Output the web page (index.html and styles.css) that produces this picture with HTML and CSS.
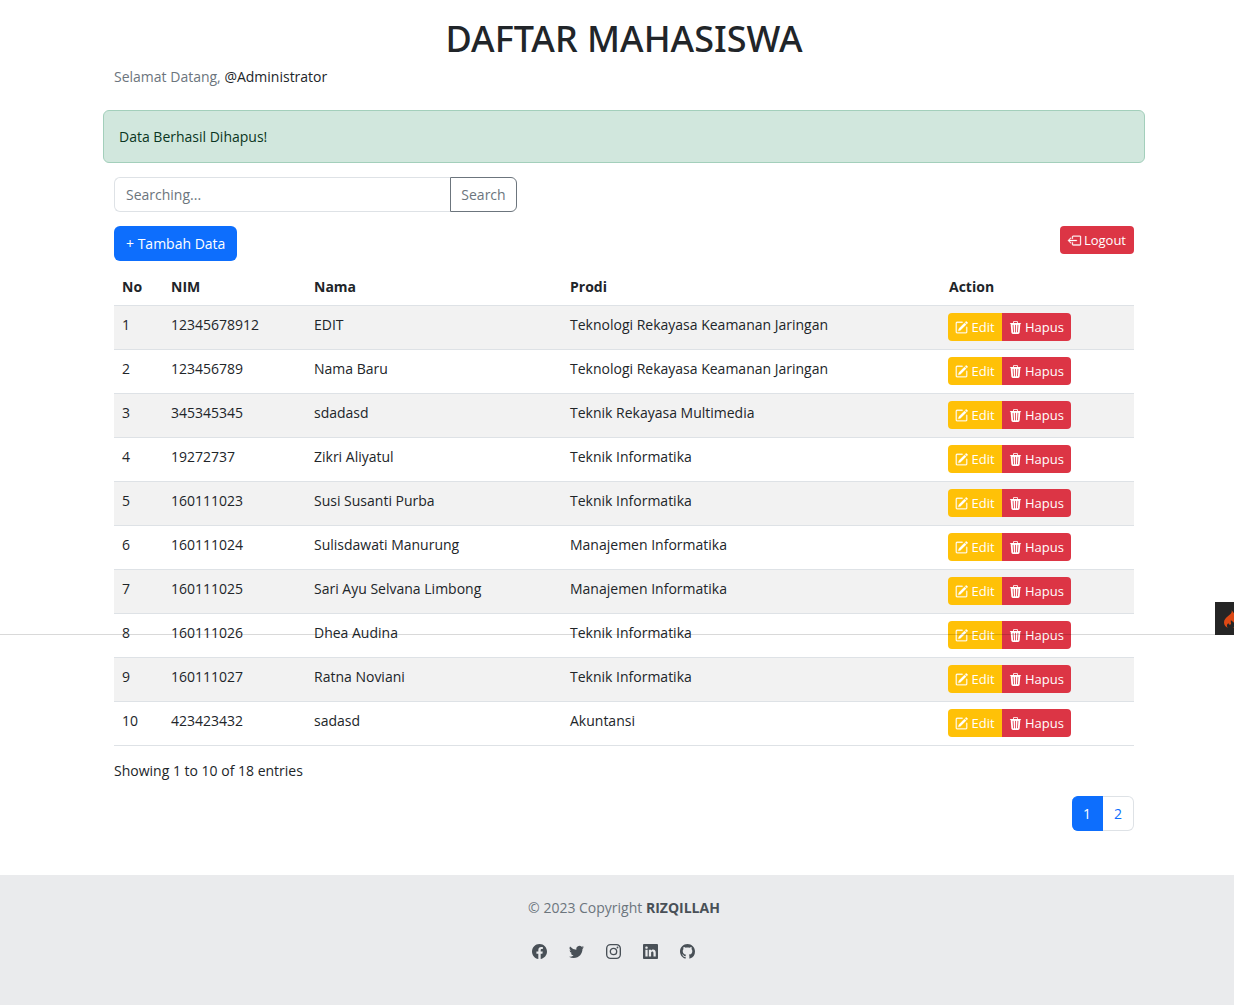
FILE: index.html
```html
<!DOCTYPE html>
<html lang="id">
<head>
<meta charset="utf-8">
<title>Daftar Mahasiswa</title>
<link rel="stylesheet" href="styles.css">
</head>
<body>
<svg class="sprite" aria-hidden="true">
  <symbol id="pencil" viewBox="0 0 16 16"><path d="M15.502 1.94a.5.5 0 0 1 0 .706L14.459 3.69l-2-2L13.502.646a.5.5 0 0 1 .707 0l1.293 1.293zm-1.75 2.456-2-2L4.939 9.21a.5.5 0 0 0-.121.196l-.805 2.414a.25.25 0 0 0 .316.316l2.414-.805a.5.5 0 0 0 .196-.12l6.813-6.814z"/><path fill-rule="evenodd" d="M1 13.5A1.5 1.5 0 0 0 2.5 15h11a1.5 1.5 0 0 0 1.5-1.5v-6a.5.5 0 0 0-1 0v6a.5.5 0 0 1-.5.5h-11a.5.5 0 0 1-.5-.5v-11a.5.5 0 0 1 .5-.5H9a.5.5 0 0 0 0-1H2.5A1.5 1.5 0 0 0 1 2.5v11z"/></symbol>
  <symbol id="trash" viewBox="0 0 16 16"><path d="M11 1.5v1h3.5a.5.5 0 0 1 0 1h-.538l-.853 10.66A2 2 0 0 1 11.115 16h-6.23a2 2 0 0 1-1.994-1.84L2.038 3.5H1.5a.5.5 0 0 1 0-1H5v-1A1.5 1.5 0 0 1 6.5 0h3A1.5 1.5 0 0 1 11 1.5Zm-5 0v1h4v-1a.5.5 0 0 0-.5-.5h-3a.5.5 0 0 0-.5.5ZM4.5 5.029l.5 8.5a.5.5 0 1 0 .998-.06l-.5-8.5a.5.5 0 1 0-.998.06Zm6.53-.528a.5.5 0 0 0-.528.47l-.5 8.5a.5.5 0 0 0 .998.058l.5-8.5a.5.5 0 0 0-.47-.528ZM8 4.5a.5.5 0 0 0-.5.5v8.5a.5.5 0 0 0 1 0V5a.5.5 0 0 0-.5-.5Z"/></symbol>
</svg>

<main class="container">
  <h1 class="title">DAFTAR MAHASISWA</h1>
  <p class="welcome">Selamat Datang, <span class="user">@Administrator</span></p>
  <div class="alert" role="alert">Data Berhasil Dihapus!</div>

  <form class="search">
    <input class="search-input" type="text" placeholder="Searching..." aria-label="Searching">
    <button class="search-button" type="submit">Search</button>
  </form>

  <div class="toolbar">
    <a class="button add" href="#">+ Tambah Data</a>
    <a class="button small danger logout" href="#"><svg class="icon bold" viewBox="0 0 16 16" aria-hidden="true"><path fill-rule="evenodd" d="M6 12.5a.5.5 0 0 0 .5.5h8a.5.5 0 0 0 .5-.5v-9a.5.5 0 0 0-.5-.5h-8a.5.5 0 0 0-.5.5v2a.5.5 0 0 1-1 0v-2A1.5 1.5 0 0 1 6.5 2h8A1.5 1.5 0 0 1 16 3.5v9a1.5 1.5 0 0 1-1.5 1.5h-8A1.5 1.5 0 0 1 5 12.5v-2a.5.5 0 0 1 1 0v2z"/><path fill-rule="evenodd" d="M.146 8.354a.5.5 0 0 1 0-.708l3-3a.5.5 0 1 1 .708.708L1.707 7.5H10.5a.5.5 0 0 1 0 1H1.707l2.147 2.146a.5.5 0 0 1-.708.708l-3-3z"/></svg>Logout</a>
  </div>

  <table class="students">
    <colgroup><col class="col-no"><col class="col-nim"><col class="col-nama"><col class="col-prodi"><col></colgroup>
    <thead>
      <tr><th scope="col">No</th><th scope="col">NIM</th><th scope="col">Nama</th><th scope="col">Prodi</th><th scope="col">Action</th></tr>
    </thead>
    <tbody>
      <tr><td>1</td><td>12345678912</td><td>EDIT</td><td>Teknologi Rekayasa Keamanan Jaringan</td><td><div class="actions"><button class="button small warning" type="button"><svg class="icon bold"><use href="#pencil"/></svg>Edit</button><button class="button small danger" type="button"><svg class="icon"><use href="#trash"/></svg>Hapus</button></div></td></tr>
      <tr><td>2</td><td>123456789</td><td>Nama Baru</td><td>Teknologi Rekayasa Keamanan Jaringan</td><td><div class="actions"><button class="button small warning" type="button"><svg class="icon bold"><use href="#pencil"/></svg>Edit</button><button class="button small danger" type="button"><svg class="icon"><use href="#trash"/></svg>Hapus</button></div></td></tr>
      <tr><td>3</td><td>345345345</td><td>sdadasd</td><td>Teknik Rekayasa Multimedia</td><td><div class="actions"><button class="button small warning" type="button"><svg class="icon bold"><use href="#pencil"/></svg>Edit</button><button class="button small danger" type="button"><svg class="icon"><use href="#trash"/></svg>Hapus</button></div></td></tr>
      <tr><td>4</td><td>19272737</td><td>Zikri Aliyatul</td><td>Teknik Informatika</td><td><div class="actions"><button class="button small warning" type="button"><svg class="icon bold"><use href="#pencil"/></svg>Edit</button><button class="button small danger" type="button"><svg class="icon"><use href="#trash"/></svg>Hapus</button></div></td></tr>
      <tr><td>5</td><td>160111023</td><td>Susi Susanti Purba</td><td>Teknik Informatika</td><td><div class="actions"><button class="button small warning" type="button"><svg class="icon bold"><use href="#pencil"/></svg>Edit</button><button class="button small danger" type="button"><svg class="icon"><use href="#trash"/></svg>Hapus</button></div></td></tr>
      <tr><td>6</td><td>160111024</td><td>Sulisdawati Manurung</td><td>Manajemen Informatika</td><td><div class="actions"><button class="button small warning" type="button"><svg class="icon bold"><use href="#pencil"/></svg>Edit</button><button class="button small danger" type="button"><svg class="icon"><use href="#trash"/></svg>Hapus</button></div></td></tr>
      <tr><td>7</td><td>160111025</td><td>Sari Ayu Selvana Limbong</td><td>Manajemen Informatika</td><td><div class="actions"><button class="button small warning" type="button"><svg class="icon bold"><use href="#pencil"/></svg>Edit</button><button class="button small danger" type="button"><svg class="icon"><use href="#trash"/></svg>Hapus</button></div></td></tr>
      <tr><td>8</td><td>160111026</td><td>Dhea Audina</td><td>Teknik Informatika</td><td><div class="actions"><button class="button small warning" type="button"><svg class="icon bold"><use href="#pencil"/></svg>Edit</button><button class="button small danger" type="button"><svg class="icon"><use href="#trash"/></svg>Hapus</button></div></td></tr>
      <tr><td>9</td><td>160111027</td><td>Ratna Noviani</td><td>Teknik Informatika</td><td><div class="actions"><button class="button small warning" type="button"><svg class="icon bold"><use href="#pencil"/></svg>Edit</button><button class="button small danger" type="button"><svg class="icon"><use href="#trash"/></svg>Hapus</button></div></td></tr>
      <tr><td>10</td><td>423423432</td><td>sadasd</td><td>Akuntansi</td><td><div class="actions"><button class="button small warning" type="button"><svg class="icon bold"><use href="#pencil"/></svg>Edit</button><button class="button small danger" type="button"><svg class="icon"><use href="#trash"/></svg>Hapus</button></div></td></tr>
    </tbody>
  </table>

  <p class="summary">Showing 1 to 10 of 18 entries</p>
  <nav class="pagination" aria-label="Halaman">
    <a class="page current" href="#" aria-current="page">1</a>
    <a class="page" href="#">2</a>
  </nav>
</main>

<footer class="footer">
  <p class="copyright">© 2023 Copyright <a class="owner" href="#">RIZQILLAH</a></p>
  <div class="social">
    <a href="#" aria-label="Facebook"><svg viewBox="0 0 16 16"><path d="M16 8.049c0-4.446-3.582-8.05-8-8.05C3.58 0-.002 3.603-.002 8.05c0 4.017 2.926 7.347 6.75 7.951v-5.625h-2.03V8.05H6.75V6.275c0-2.017 1.195-3.131 3.022-3.131.876 0 1.791.157 1.791.157v1.98h-1.009c-.993 0-1.303.621-1.303 1.258v1.51h2.218l-.354 2.326H9.25V16c3.824-.604 6.75-3.934 6.75-7.951z"/></svg></a>
    <a href="#" aria-label="Twitter"><svg viewBox="0 0 16 16"><path d="M5.026 15c6.038 0 9.341-5.003 9.341-9.334 0-.14 0-.282-.006-.422A6.685 6.685 0 0 0 16 3.542a6.658 6.658 0 0 1-1.889.518 3.301 3.301 0 0 0 1.447-1.817 6.533 6.533 0 0 1-2.087.793A3.286 3.286 0 0 0 7.875 6.03a9.325 9.325 0 0 1-6.767-3.429 3.289 3.289 0 0 0 1.018 4.382A3.323 3.323 0 0 1 .64 6.575v.045a3.288 3.288 0 0 0 2.632 3.218 3.203 3.203 0 0 1-.865.115 3.23 3.23 0 0 1-.614-.057 3.283 3.283 0 0 0 3.067 2.277A6.588 6.588 0 0 1 .78 13.58a6.32 6.32 0 0 1-.78-.045A9.344 9.344 0 0 0 5.026 15z"/></svg></a>
    <a href="#" aria-label="Instagram"><svg viewBox="0 0 16 16"><path fill="none" stroke="currentColor" stroke-width="1.44" d="M4.8.72h6.4a4.08 4.08 0 0 1 4.08 4.08v6.4a4.08 4.08 0 0 1-4.08 4.08H4.8A4.08 4.08 0 0 1 .72 11.2V4.8A4.08 4.08 0 0 1 4.8.72z"/><circle cx="8" cy="8" r="3.39" fill="none" stroke="currentColor" stroke-width="1.44"/><circle cx="12.27" cy="3.73" r=".96"/></svg></a>
    <a href="#" aria-label="LinkedIn"><svg viewBox="0 0 16 16"><path d="M0 1.146C0 .513.526 0 1.175 0h13.65C15.474 0 16 .513 16 1.146v13.708c0 .633-.526 1.146-1.175 1.146H1.175C.526 16 0 15.487 0 14.854V1.146zm4.943 12.248V6.169H2.542v7.225h2.401zm-1.2-8.212c.837 0 1.358-.554 1.358-1.248-.015-.709-.52-1.248-1.342-1.248-.822 0-1.359.54-1.359 1.248 0 .694.521 1.248 1.327 1.248h.016zm4.908 8.212V9.359c0-.216.016-.432.08-.586.173-.431.568-.878 1.232-.878.869 0 1.216.662 1.216 1.634v3.865h2.401V9.25c0-2.22-1.184-3.252-2.764-3.252-1.274 0-1.845.7-2.165 1.193v.025h-.016a5.54 5.54 0 0 1 .016-.025V6.169h-2.4c.03.678 0 7.225 0 7.225h2.4z"/></svg></a>
    <a href="#" aria-label="GitHub"><svg viewBox="0 0 16 16"><path d="M8 0C3.58 0 0 3.58 0 8c0 3.54 2.29 6.53 5.47 7.59.4.07.55-.17.55-.38 0-.19-.01-.82-.01-1.49-2.01.37-2.53-.49-2.69-.94-.09-.23-.48-.94-.82-1.13-.28-.15-.68-.52-.01-.53.63-.01 1.08.58 1.23.82.72 1.21 1.87.87 2.33.66.07-.52.28-.87.51-1.07-1.78-.2-3.64-.89-3.64-3.95 0-.87.31-1.59.82-2.15-.08-.2-.36-1.02.08-2.12 0 0 .67-.21 2.2.82.64-.18 1.32-.27 2-.27.68 0 1.36.09 2 .27 1.53-1.04 2.2-.82 2.2-.82.44 1.1.16 1.92.08 2.12.51.56.82 1.27.82 2.15 0 3.07-1.87 3.75-3.65 3.95.29.25.54.73.54 1.48 0 1.07-.01 1.93-.01 2.2 0 .21.15.46.55.38A8.012 8.012 0 0 0 16 8c0-4.42-3.58-8-8-8z"/></svg></a>
  </div>
</footer>

<div class="debug-bar">
  <button class="debug-toggle" type="button" aria-label="Debug toolbar"><svg viewBox="0 0 20 20" aria-hidden="true"><path d="M8.500 1C10.500 6 1 7.500 1 13.500c0 2.500 1.500 4.500 4 5.500-1.500-1.500-1.500-3.500.500-5 0 1.500 1 2 2 1.500 1.500-1-.500-2.500.500-4.500.500 1.500 4 2 3.500 5 0 1.500-1 2.500-2 3 4-1 7-4.500 5.500-8.500-.500 1-1 1.500-2 1.500C14.500 7 11.500 5.500 8.500 1z"/></svg></button>
</div>
</body>
</html>
```
FILE: styles.css
```css
* { box-sizing: border-box; }

body {
  margin: 0;
  min-height: 100vh;
  display: flex;
  flex-direction: column;
  overflow-x: hidden;
  background: #fff;
  color: #212529;
  font: 14px/22px "Open Sans", "Noto Sans", sans-serif;
}

h1, p { margin: 0; }
a { color: inherit; text-decoration: none; }
button, input { font: inherit; }
svg { fill: currentColor; }
.sprite { position: absolute; width: 0; height: 0; }

.container {
  width: 100%;
  max-width: 1056px;
  margin: 0 auto;
  padding: 17px 11px 44px 25px;
}

.title {
  font-family: "Noto Sans", sans-serif;
  font-size: 36px;
  line-height: 44px;
  font-weight: 500;
  text-align: center;
  margin-bottom: 5px;
}

.welcome { color: #6c757d; }
.user { color: #212529; }

.alert {
  margin: 22px -11px 14px;
  padding: 15px 15px 14px;
  border: 1px solid #a3cfbb;
  border-radius: 6px;
  background: #d1e7dd;
  color: #0a3622;
}

.search { display: flex; width: 403px; max-width: 100%; }
.search-input {
  flex: 1;
  min-width: 0;
  height: 35px;
  padding: 0 11px;
  border: 1px solid #dee2e6;
  border-right: 0;
  border-radius: 6px 0 0 6px;
  color: #212529;
}
.search-input::placeholder { color: #6c757d; opacity: 1; }
.search-button {
  width: 67px;
  padding: 0;
  border: 1px solid #6c757d;
  border-radius: 0 6px 6px 0;
  background: #fff;
  color: #6c757d;
}

.toolbar {
  display: flex;
  justify-content: space-between;
  align-items: flex-start;
  margin: 14px 0 7px;
}

.button {
  display: inline-flex;
  align-items: center;
  justify-content: center;
  border: 0;
  color: #fff;
}
.add { height: 35px; padding: 0 12px; border-radius: 6px; background: #0d6efd; }
.small { height: 28px; padding: 0 8px; gap: 3px; border-radius: 4px; font-size: 13px; }
.danger { background: #dc3545; }
.warning { background: #ffc107; }
.icon { width: 13px; height: 13px; flex: none; overflow: visible; }
.icon.bold { stroke: currentColor; stroke-width: 0.4px; }

.students { width: 100%; table-layout: fixed; border-collapse: separate; border-spacing: 0; }
.col-no { width: 49px; }
.col-nim { width: 143px; }
.col-nama { width: 256px; }
.col-prodi { width: 379px; }
.students th, .students td {
  padding: 8px 8px 7px;
  border-bottom: 1px solid #dee2e6;
  text-align: left;
  vertical-align: top;
}
.students tbody tr:nth-child(odd) { background: #f2f2f2; }
.students td:last-child { padding: 7px 8px 8px 7px; }
.actions { display: flex; }
.actions .warning { width: 54px; border-radius: 4px 0 0 4px; }
.actions .danger { width: 69px; border-radius: 0 4px 4px 0; }

.summary { margin: 14px 0; }

.pagination { display: flex; justify-content: flex-end; }
.page {
  width: 31px;
  height: 35px;
  border: 1px solid #dee2e6;
  border-left: 0;
  border-radius: 0 6px 6px 0;
  line-height: 33px;
  text-align: center;
  color: #0d6efd;
}
.page.current {
  border-color: #0d6efd;
  border-radius: 6px 0 0 6px;
  background: #0d6efd;
  color: #fff;
}

.footer {
  flex: 1;
  padding: 22px 0 22px 14px;
  background: #eaebed;
  color: #6c757d;
  text-align: center;
}
.owner { color: #495057; font-weight: 700; }
.social { display: flex; justify-content: center; margin-top: 25px; color: #495057; }
.social a { display: flex; margin-right: 22px; }
.social svg { width: 15px; height: 15px; }

/* Collapsed debug toolbar that floats over the page */
.debug-bar {
  position: fixed;
  top: 602px;
  left: 0;
  right: 0;
  height: 33px;
  display: flex;
  justify-content: flex-end;
  border-bottom: 1px solid rgba(0, 0, 0, 0.15);
  pointer-events: none;
}
.debug-toggle {
  width: 19px;
  height: 33px;
  padding: 0 0 0 8px;
  border: 0;
  overflow: hidden;
  background: #252525;
  color: #dd4814;
  pointer-events: auto;
}
.debug-toggle svg { display: block; width: 20px; height: 20px; }
```
